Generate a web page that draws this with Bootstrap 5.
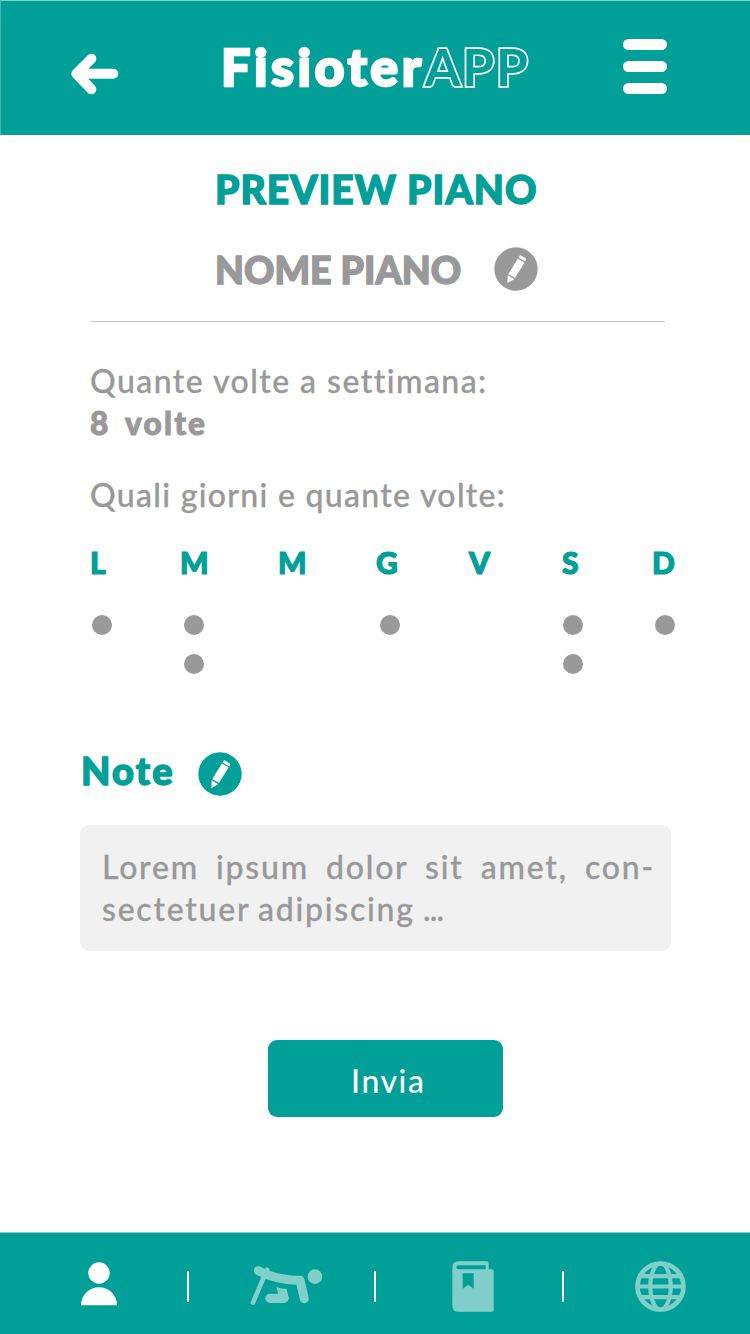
<!DOCTYPE html>
<html lang="it">
<head>
<meta charset="utf-8">
<meta name="viewport" content="width=device-width, initial-scale=1">
<title>FisioterAPP</title>
<link href="https://cdn.jsdelivr.net/npm/bootstrap@5.3.0/dist/css/bootstrap.min.css" rel="stylesheet">
<style>
:root{--teal:#00a099;--soft:#80cfcb;--ink:#999}
body{font-family:Lato,"Noto Sans",sans-serif;font-weight:500;color:var(--ink);background:#fff;height:1334px;overflow:hidden}
h1,h2,p{margin:0}
svg{display:block;flex:none}
.t-teal{color:var(--teal)}
.topbar{height:135px;background:var(--teal);border-top:1px solid var(--soft);border-left:1px solid #40b8b3;padding:0 83px 3px 70px}
.back-btn{width:150px;padding-top:15px}
.logo{font-size:52px;line-height:62px;font-weight:900;letter-spacing:3.500px;white-space:nowrap;-webkit-text-stroke:2.400px #fff;margin-top:-2px}
.logo .outlined{color:var(--teal);-webkit-text-stroke:3.400px #fff;paint-order:stroke fill;font-size:51.500px;letter-spacing:1.700px;font-weight:700}
.bars{gap:11.500px;width:44px}
.bars span{height:10.800px;border-radius:6px;background:#fff}
.heading{font-weight:900;line-height:48px;white-space:nowrap;-webkit-text-stroke:1.400px currentColor}
.h-main{font-size:39px;letter-spacing:1px}
.h-name{font-size:37.500px;letter-spacing:0;width:279px;padding-top:1px}
.h-note{font-size:38px;letter-spacing:2.200px;width:118px;padding-left:1px}
.plan{padding:30px 85px 0 215px;height:186px}
.plan-name{margin-top:32px}
.pen-a{margin-bottom:2px}
.info{margin:0 85px 0 90px;border-top:1px solid #c8c8c8;padding-top:37.500px}
.line{font-size:32px;line-height:42px;letter-spacing:1.450px;white-space:pre;-webkit-text-stroke:.3px currentColor}
.line b{font-weight:900;font-size:31.500px;letter-spacing:2.200px;word-spacing:-2px;-webkit-text-stroke:1px currentColor}
.info .l-three{margin-top:30px;letter-spacing:1.300px}
.days{display:grid;grid-template-columns:90px 98px 98px 93px 93px 90px 24px;height:133px;margin:25.500px 0 0 90px}
.days strong{font-size:30px;line-height:42px;font-weight:900;margin-bottom:32px;-webkit-text-stroke:1.200px currentColor}
.dot{width:20px;height:20px;border-radius:50%;background:var(--ink);margin:0 0 18.600px 3px}
.days .dot-in{margin-left:1px}
.days .dot-first{margin-left:2px}
.days .dot-out{margin-left:3.500px}
.notes{margin:72px 79px 0 80px}
.pen-b{margin:7px 0 0}
.note-head{height:48px}
.note-box{background:#f1f1f1;border-radius:9px;height:125.500px;margin-top:31px;padding:20.500px 16px 0 22px}
.note-box .line{white-space:nowrap;letter-spacing:1.750px}
.note-box .spread{text-align-last:justify}
.note-box .ellips{letter-spacing:-.8px}
.note-box .l-last{word-spacing:-1.500px}
.send{width:234.500px;height:77.500px;margin:89px 0 0 268px;border:0;border-radius:9px;background:var(--teal);color:#fff;font-size:32px;line-height:42px;font-weight:500;letter-spacing:1.500px;padding:5px 0 0 6px}
.tabs{height:102px;background:var(--teal);border-top:1px solid var(--soft)}
.tabs a{height:101px;width:187.500px;padding:0 0 0 11px;color:var(--soft)}
.tabs .tab-run{padding:5px 0 0 10.500px}
.tabs .tab-book{padding:5px 0 0 8px}
.tabs .tab-globe{padding:5px 0 0 8px}
.tabs i{width:2px;height:31px;background:#fff;margin:6px -1px 0;flex:none}
</style>
</head>
<body class="d-flex flex-column">
<header class="topbar d-flex align-items-center text-white">
  <a class="back-btn" href="#" aria-label="Indietro"><svg width="48" height="42" viewBox="212 160 144 126" fill="none" stroke="#fff" stroke-width="30" stroke-linecap="round" stroke-linejoin="round"><path d="M228 222.500H339M273 177L228 222.500L273 269"/></svg></a>
  <div class="logo">Fisioter<span class="outlined">APP</span></div>
  <div class="bars d-flex flex-column ms-auto"><span></span><span></span><span></span></div>
</header>

<main class="flex-grow-1">
  <section class="plan">
    <h1 class="heading h-main t-teal">PREVIEW PIANO</h1>
    <div class="plan-name d-flex align-items-center">
      <h2 class="heading h-name">NOME PIANO</h2>
      <svg class="pen-a" width="44" height="44" viewBox="-22 -22 44 44"><circle r="21.700" fill="#999"/><g transform="rotate(31.600)" fill="#fff"><path d="M-3.900-11.200V-12.600Q-3.900-14.200-2.400-14.200H2.400Q3.900-14.200 3.900-12.600V-11.200ZM-3.900-9.900H3.900V8.300H-3.900ZM-3.800 9.600H3.800L0 16.700Z"/></g></svg>
    </div>
  </section>
  <section class="info">
    <p class="line">Quante volte a settimana:</p>
    <p class="line"><b>8  volte</b></p>
    <p class="line l-three">Quali giorni e quante volte:</p>
  </section>
  <section class="days">
    <div class="d-flex flex-column t-teal"><strong>L</strong><span class="dot dot-first"></span></div>
    <div class="d-flex flex-column t-teal"><strong>M</strong><span class="dot dot-out"></span><span class="dot dot-out"></span></div>
    <div class="d-flex flex-column t-teal"><strong>M</strong></div>
    <div class="d-flex flex-column t-teal"><strong>G</strong><span class="dot dot-out"></span></div>
    <div class="d-flex flex-column t-teal"><strong>V</strong></div>
    <div class="d-flex flex-column t-teal"><strong>S</strong><span class="dot dot-in"></span><span class="dot dot-in"></span></div>
    <div class="d-flex flex-column t-teal"><strong>D</strong><span class="dot"></span></div>
  </section>
  <section class="notes">
    <div class="note-head d-flex align-items-center">
      <h2 class="heading h-note t-teal">Note</h2>
      <svg class="pen-b" width="44" height="44" viewBox="-22 -22 44 44"><circle r="21.700" fill="#00a099"/><g transform="rotate(31.600)" fill="#fff"><path d="M-3.900-11.200V-12.600Q-3.900-14.200-2.400-14.200H2.400Q3.900-14.200 3.900-12.600V-11.200ZM-3.900-9.900H3.900V8.300H-3.900ZM-3.800 9.600H3.800L0 16.700Z"/></g></svg>
    </div>
    <div class="note-box">
      <p class="line spread">Lorem ipsum dolor sit amet, con-</p>
      <p class="line l-last">sectetuer adipiscing <span class="ellips">...</span></p>
    </div>
  </section>
  <button class="btn send" type="button">Invia</button>
</main>

<nav class="tabs d-flex align-items-center" aria-label="Sezioni">
  <a class="flex-shrink-0 d-flex align-items-center justify-content-center" href="#" aria-label="Profilo"><svg width="38" height="44" viewBox="-19 0 38 44" fill="#fff"><circle cy="11" r="10.700"/><path d="M-18 43.200A18 18 0 0 1 18 43.200Z"/></svg></a>
  <i></i>
  <a class="tab-run flex-shrink-0 d-flex align-items-center justify-content-center" href="#" aria-label="Esercizi"><svg width="73.300" height="41.300" viewBox="570 138 220 124" fill="none" stroke="currentColor" stroke-linecap="round" stroke-linejoin="round"><circle cx="765" cy="173" r="22" fill="currentColor" stroke="none"/><path d="M595 155Q650 184 720 184L733 239" stroke-width="27"/><path d="M621 152L579 251" stroke-width="14"/><path d="M630 238H672" stroke-width="28"/><path d="M649 204Q665 210 680 210L687 240H652L654 222Z" fill="currentColor" stroke="none"/></svg></a>
  <i></i>
  <a class="tab-book flex-shrink-0 d-flex align-items-center justify-content-center" href="#" aria-label="Diario"><svg width="42" height="51" viewBox="307 125 126 153" fill="currentColor" fill-rule="evenodd"><path d="M326 126H411Q417 126 417 132V150H427Q432 150 432 155V272Q432 277 427 277H326Q308 277 308 259V144Q308 126 326 126ZM326 138Q320 138 320 144Q320 150 326 150H408V138ZM339 162V208L355.500 196L372 208V162Z"/></svg></a>
  <i></i>
  <a class="tab-globe flex-shrink-0 d-flex align-items-center justify-content-center" href="#" aria-label="Web"><svg width="51" height="51" viewBox="-76.500 -76.500 153 153" fill="none" stroke="currentColor" stroke-width="12.500"><circle r="69" stroke-width="14"/><ellipse rx="30.500" ry="69"/><path d="M-60-31H60M-68 0H68M-60 32H60"/></svg></a>
</nav>
<script src="https://cdn.jsdelivr.net/npm/bootstrap@5.3.0/dist/js/bootstrap.bundle.min.js"></script>
</body>
</html>
